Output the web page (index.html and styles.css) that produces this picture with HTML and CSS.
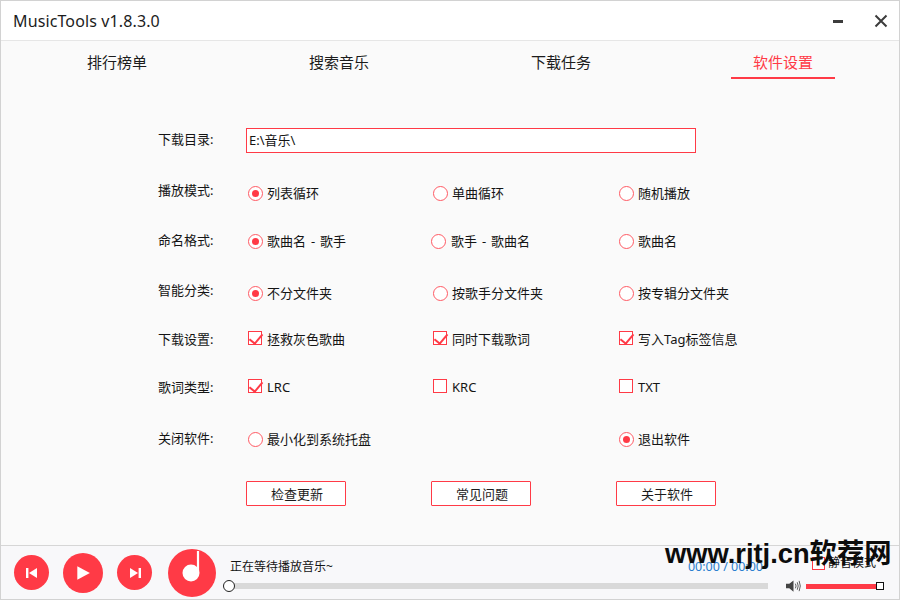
FILE: index.html
```html
<!DOCTYPE html>
<html lang="zh-CN">
<head>
<meta charset="utf-8">
<title>MusicTools</title>
<link rel="stylesheet" href="styles.css">
</head>
<body>
<div class="window">
  <header class="titlebar">
    <span class="app-title">MusicTools v1.8.3.0</span>
    <div class="win-controls">
      <svg class="win-icon" viewBox="0 0 14 14"><rect x="1" y="6" width="10" height="3" fill="#3c3c3c"/></svg>
      <svg class="win-icon close" viewBox="0 0 14 14"><path d="M1.5 1.5L12.5 12.5M12.5 1.5L1.5 12.5" stroke="#3c3c3c" stroke-width="2" fill="none"/></svg>
    </div>
  </header>

  <nav class="tabs">
    <span class="tab">排行榜单</span>
    <span class="tab">搜索音乐</span>
    <span class="tab">下载任务</span>
    <span class="tab active">软件设置</span>
  </nav>

  <main class="settings">
    <div class="row first">
      <span class="label up2">下载目录:</span>
      <div class="path">E:\音乐\</div>
    </div>
    <div class="row wide">
      <span class="label up6">播放模式:</span>
      <span class="opt"><i class="radio on"></i>列表循环</span>
      <span class="opt"><i class="radio"></i>单曲循环</span>
      <span class="opt"><i class="radio"></i>随机播放</span>
    </div>
    <div class="row">
      <span class="label up2">命名格式:</span>
      <span class="opt"><i class="radio on"></i>歌曲名 - 歌手</span>
      <span class="opt shift"><i class="radio"></i>歌手 - 歌曲名</span>
      <span class="opt"><i class="radio"></i>歌曲名</span>
    </div>
    <div class="row wide">
      <span class="label up6">智能分类:</span>
      <span class="opt"><i class="radio on"></i>不分文件夹</span>
      <span class="opt"><i class="radio"></i>按歌手分文件夹</span>
      <span class="opt"><i class="radio"></i>按专辑分文件夹</span>
    </div>
    <div class="row tight">
      <span class="label">下载设置:</span>
      <span class="opt"><i class="check on"></i>拯救灰色歌曲</span>
      <span class="opt"><i class="check on"></i>同时下载歌词</span>
      <span class="opt"><i class="check on"></i>写入Tag标签信息</span>
    </div>
    <div class="row">
      <span class="label">歌词类型:</span>
      <span class="opt"><i class="check on"></i>LRC</span>
      <span class="opt"><i class="check"></i>KRC</span>
      <span class="opt"><i class="check"></i>TXT</span>
    </div>
    <div class="row wide">
      <span class="label up2">关闭软件:</span>
      <span class="opt"><i class="radio"></i>最小化到系统托盘</span>
      <span class="opt"></span>
      <span class="opt"><i class="radio on"></i>退出软件</span>
    </div>
    <div class="row buttons">
      <span class="label"></span>
      <button class="btn">检查更新</button>
      <button class="btn">常见问题</button>
      <button class="btn">关于软件</button>
    </div>
  </main>

  <footer class="player">
    <button class="round small"><svg viewBox="0 0 14 14"><rect x="1" y="2" width="2.4" height="10" fill="#fff"/><path d="M12 2V12L4 7Z" fill="#fff"/></svg></button>
    <button class="round big"><svg viewBox="0 0 14 14"><path d="M2 1V13L13 7Z" fill="#fff"/></svg></button>
    <button class="round small"><svg viewBox="0 0 14 14"><rect x="10.6" y="2" width="2.4" height="10" fill="#fff"/><path d="M2 2V12L10 7Z" fill="#fff"/></svg></button>
    <svg class="logo" viewBox="0 0 48 48"><circle cx="24" cy="24" r="24" fill="#ff3a46"/><circle cx="23" cy="24" r="8.5" fill="#fff"/><path d="M30 2V24" stroke="#fff" stroke-width="2.2" fill="none"/></svg>
    <div class="track-area">
      <div class="track-info"><span class="now">正在等待播放音乐~</span><span class="time">00:00 / 00:00</span></div>
      <div class="progress"><i class="knob"></i></div>
    </div>
    <div class="side">
      <div class="mute"><i class="check thin"></i>静音模式</div>
      <div class="volume">
        <svg class="speaker" viewBox="0 0 16 14"><path d="M0 4.5H3.5L8 1V13L3.5 9.5H0Z" fill="#444"/><path d="M10 4.5Q11.5 7 10 9.5M12 3Q14 7 12 11M14 1.5Q16.5 7 14 12.5" stroke="#555" stroke-width="1" fill="none"/></svg>
        <div class="vol-bar"><i class="vol-knob"></i></div>
      </div>
    </div>
  </footer>
  <div class="watermark">www.rjtj.cn软荐网</div>
</div>
</body>
</html>
```
FILE: styles.css
```css
* { box-sizing: border-box; }
html, body { margin: 0; padding: 0; }
body {
  width: 900px;
  height: 600px;
  overflow: hidden;
  font-family: "Noto Sans", "Noto Sans CJK SC", sans-serif;
  font-size: 13px;
  color: #141414;
}
.window {
  position: relative;
  width: 900px;
  height: 600px;
  border: 1px solid #d2d2d2;
  background: #fafafa;
  display: flex;
  flex-direction: column;
}
.titlebar {
  height: 40px;
  flex: none;
  background: #fff;
  border-bottom: 1px solid #e6e6e6;
  display: flex;
  align-items: center;
  justify-content: space-between;
  padding: 0 11px 0 12px;
}
.app-title { font-size: 16px; letter-spacing: 0.12px; line-height: 20px; color: #1c1c1c; }
.win-controls { display: flex; align-items: center; gap: 28px; }
.win-icon { width: 14px; height: 14px; display: block; }
.tabs {
  flex: none;
  height: 40px;
  display: flex;
  padding-left: 5px;
}
.tab {
  width: 222px;
  flex: none;
  text-align: center;
  font-size: 15px;
  line-height: 22px;
  padding-top: 10px;
  color: #1c1c1c;
}
.tab.active {
  width: 104px;
  margin-left: 59px;
  height: 38px;
  color: #ff3a46;
  border-bottom: 2px solid #ff3a46;
}
.settings {
  flex: 1;
  padding: 47px 0 0 157px;
}
.row {
  display: grid;
  grid-template-columns: 89px 185px 186px 200px;
  align-items: center;
  height: 24px;
  margin-top: 24px;
}
.row.first { height: 25px; margin-top: 0; grid-template-columns: 88px 450px; }
.row.wide { margin-top: 28px; }
.row.tight { margin-top: 22px; }
.row.buttons { margin-top: 30px; grid-template-columns: 88px 185px 185px 100px; }
.label { font-size: 13px; line-height: 20px; }
.label.up2 { margin-top: -3px; }
.label.up6 { margin-top: -6px; }
.path {
  width: 450px;
  height: 25px;
  border: 1px solid #ff3a46;
  background: #fff;
  line-height: 23px;
  padding-left: 2px;
}
.opt {
  display: flex;
  align-items: center;
  gap: 4px;
  padding-left: 1px;
  white-space: nowrap;
  line-height: 20px;
  word-spacing: 1.5px;
}
.opt.shift { margin-left: -2px; gap: 5px; }
.radio {
  width: 15px;
  height: 15px;
  border: 1px solid #ff5a64;
  border-radius: 50%;
  background: #fff;
  flex: none;
  display: flex;
  align-items: center;
  justify-content: center;
}
.radio.on::after {
  content: "";
  width: 7px;
  height: 7px;
  border-radius: 50%;
  background: #ff3a46;
}
.check {
  position: relative;
  width: 14px;
  height: 14px;
  border: 1px solid #ff3a46;
  background: #fff;
  flex: none;
  margin: -3px 1px 0 0;
}
.check.on::after {
  content: "";
  position: absolute;
  left: 3px;
  top: -1px;
  width: 6px;
  height: 11px;
  border: solid #ff3a46;
  border-width: 0 2.5px 2.5px 0;
  transform: rotate(40deg);
}
.btn {
  width: 100px;
  height: 25px;
  border: 1px solid #ff3a46;
  border-radius: 1px;
  background: #fff;
  font: inherit;
  color: #1c1c1c;
  padding: 0 0 0 2px;
}
.player {
  flex: none;
  height: 54px;
  background: #f8f8fa;
  border-top: 1px solid #d6d6d6;
  display: flex;
  align-items: center;
  padding-left: 13px;
}
.round {
  border: 0;
  padding: 0;
  border-radius: 50%;
  background: #ff3a46;
  flex: none;
  display: flex;
  align-items: center;
  justify-content: center;
}
.round.small { width: 35px; height: 35px; }
.round.big { width: 40px; height: 40px; margin: 0 14px; }
.round.small svg { width: 14px; height: 14px; }
.round.big svg { width: 16px; height: 16px; }
.logo { width: 48px; height: 48px; flex: none; margin-left: 16px; }
.track-area {
  width: 539px;
  margin-left: 13px;
  flex: none;
  display: flex;
  flex-direction: column;
  gap: 3px;
  padding-top: 2px;
}
.track-info { display: flex; justify-content: space-between; padding: 0 5px 0 1px; line-height: 18px; font-size: 12px; }
.time { color: #2a7fd0; font-size: 12.5px; }
.progress { position: relative; height: 6px; background: #d9d9d9; margin-top: 4px; }
.knob {
  position: absolute;
  left: -6px;
  top: -3px;
  width: 12px;
  height: 12px;
  border: 1.5px solid #222;
  border-radius: 50%;
  background: #fff;
}
.side {
  width: 100px;
  margin-left: 18px;
  flex: none;
  display: flex;
  flex-direction: column;
  gap: 7px;
  padding-top: 2px;
}
.mute {
  display: flex;
  align-items: center;
  gap: 3px;
  padding-left: 26px;
  font-size: 12px;
  line-height: 18px;
  white-space: nowrap;
}
.mute .thin { width: 13px; height: 13px; margin: 0; }
.volume { display: flex; align-items: center; gap: 5px; }
.speaker { width: 15px; height: 14px; flex: none; }
.vol-bar { position: relative; width: 74px; height: 5px; background: #ff3a46; }
.vol-knob {
  position: absolute;
  right: -4px;
  top: -2px;
  width: 8px;
  height: 8px;
  border: 1px solid #111;
  background: #fff;
}
.watermark {
  position: absolute;
  left: 664px;
  top: 533px;
  font-family: "Liberation Sans", "Noto Sans CJK SC", sans-serif;
  font-size: 27.3px;
  font-weight: 700;
  line-height: 40px;
  color: #0c0c0c;
  white-space: nowrap;
}
```
